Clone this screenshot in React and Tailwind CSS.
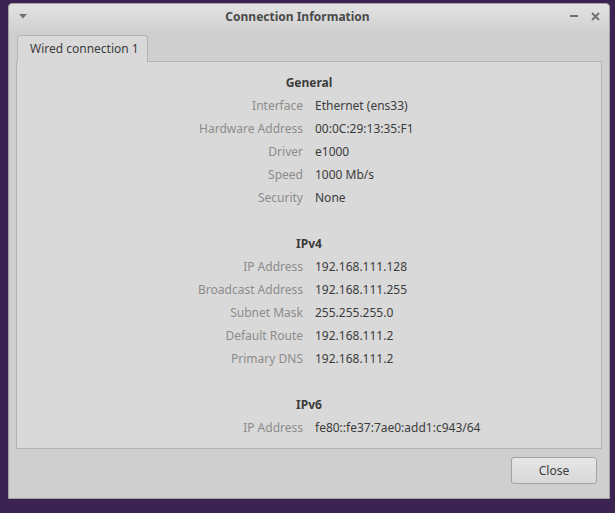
import React from "react";

const general = [
  ["Interface", "Ethernet (ens33)"],
  ["Hardware Address", "00:0C:29:13:35:F1"],
  ["Driver", "e1000"],
  ["Speed", "1000 Mb/s"],
  ["Security", "None"],
];
const ipv4 = [
  ["IP Address", "192.168.111.128"],
  ["Broadcast Address", "192.168.111.255"],
  ["Subnet Mask", "255.255.255.0"],
  ["Default Route", "192.168.111.2"],
  ["Primary DNS", "192.168.111.2"],
];
const ipv6 = [["IP Address", "fe80::fe37:7ae0:add1:c943/64"]];

function Section({ title, rows }) {
  return (
    <div>
      <div className="h-[22px] flex items-center justify-center font-bold text-[#3c3c3c]">{title}</div>
      {rows.map(([k, v], i) => (
        <div key={i} className="grid grid-cols-[286px_1fr] gap-x-[12px] h-[23px] items-center">
          <div className="text-right text-[#8c8c8c] whitespace-nowrap">{k}</div>
          <div className="text-[#3c3c3c] whitespace-nowrap">{v}</div>
        </div>
      ))}
    </div>
  );
}

export default function App() {
  return (
    <div
      className="w-[615px] h-[513px] bg-[#3b2452] overflow-hidden pt-[3px] pl-[8px]"
      style={{ fontFamily: '"Noto Sans", sans-serif' }}
    >
      <div className="w-[602px] h-[496px] rounded-t-[4px] border border-[#a3a3a3] bg-[#cfcfcf] flex flex-col text-[12px]">
        {/* title bar */}
        <div className="h-[26px] rounded-t-[4px] bg-gradient-to-b from-[#e2e2e2] to-[#d2d2d2] flex items-center relative">
          <svg className="absolute left-[10px] top-[10px]" width="8" height="5" viewBox="0 0 8 5">
            <path d="M0 0 L8 0 L4 4.5 Z" fill="#707070" />
          </svg>
          <div className="flex-1 text-center font-bold text-[#4a4a4a] pr-[23px]">Connection Information</div>
          <svg className="absolute right-[31px] top-[11px]" width="8" height="2" viewBox="0 0 8 2">
            <rect x="0" y="0" width="8" height="2" fill="#707070" />
          </svg>
          <svg className="absolute right-[9px] top-[8px]" width="9" height="9" viewBox="0 0 9 9">
            <path d="M1 1 L8 8 M8 1 L1 8" stroke="#707070" strokeWidth="1.8" />
          </svg>
        </div>
        {/* tabs */}
        <div className="px-[7px] pt-[5px]">
          <div className="flex">
            <div className="ml-[1px] w-[131px] h-[27px] rounded-t-[3px] border border-b-0 border-[#b5b5b5] bg-[#d9d9d9] flex items-center pl-[12px] text-[#3c3c3c] whitespace-nowrap relative z-10 -mb-[1px]">
              Wired connection 1
            </div>
          </div>
          <div className="h-[388px] border border-[#b5b5b5] bg-[#d9d9d9] pt-[10px]">
            <Section title="General" rows={general} />
            <div className="h-[24px]" />
            <Section title="IPv4" rows={ipv4} />
            <div className="h-[24px]" />
            <Section title="IPv6" rows={ipv6} />
          </div>
        </div>
        {/* footer */}
        <div className="flex justify-end pr-[12px] pt-[8px]">
          <button className="w-[86px] h-[27px] rounded-[3px] border border-[#a3a3a3] bg-gradient-to-b from-[#e6e6e6] to-[#d8d8d8] text-[#3c3c3c]">
            Close
          </button>
        </div>
      </div>
    </div>
  );
}
